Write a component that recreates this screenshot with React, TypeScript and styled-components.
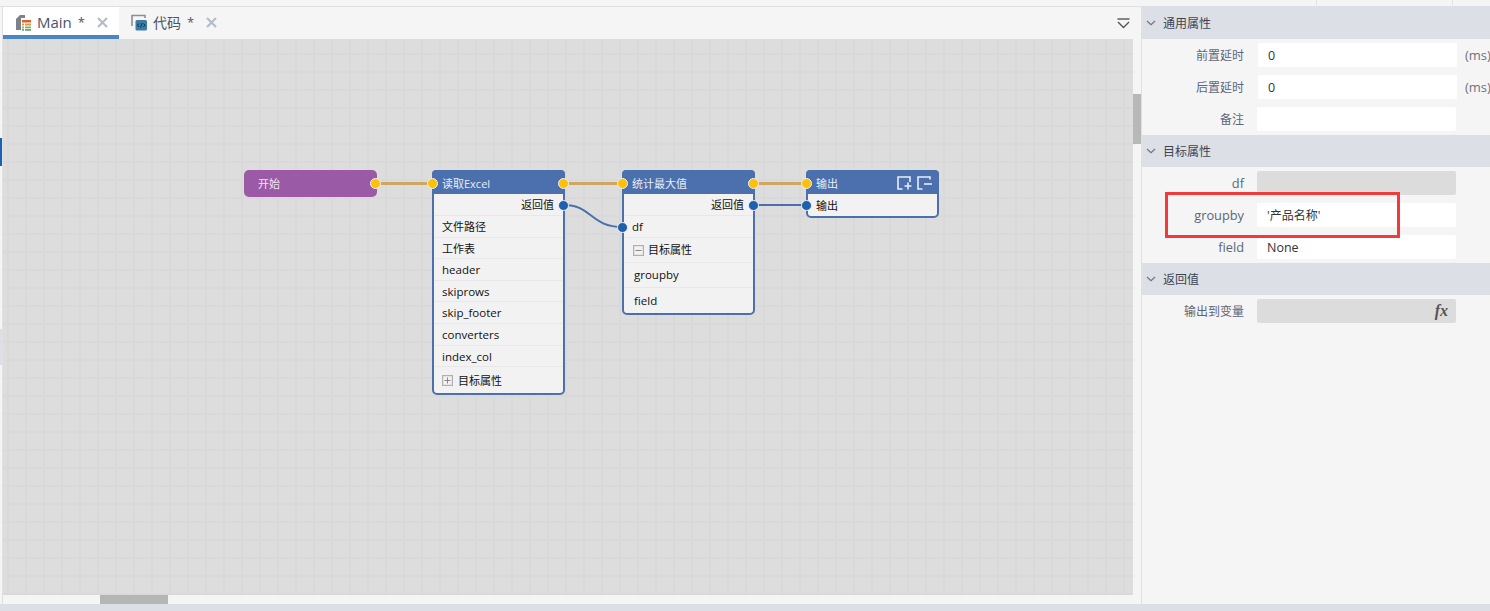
import type { FC, ReactNode } from "react";
import styled, { createGlobalStyle } from "styled-components";

const COLOR = {
  page: "#f5f5f5",
  line: "#e0e0e0",
  strip: "#dce0e6",
  blue: "#4c70ae",
  port: "#1f5fb0",
  gold: "#ffc107",
  wire: "#cfa763",
};

const FONT = `"Open Sans", "Noto Sans CJK SC", sans-serif`;

const Global = createGlobalStyle`
  html, body {
    margin: 0;
    padding: 0;
    background: ${COLOR.page};
    overflow: hidden;
  }
  * { box-sizing: border-box; }
`;

const Page = styled.div`
  width: 1490px;
  height: 611px;
  display: flex;
  flex-direction: column;
  font-family: ${FONT};
  background: ${COLOR.page};
  overflow: hidden;
`;

const TopStrip = styled.div`
  height: 7px;
  flex: none;
  border-bottom: 1px solid ${COLOR.line};
  display: flex;
`;

const Tick = styled.i<{ $left: number }>`
  width: 1px;
  height: 5px;
  background: #e4e4e4;
  margin-left: ${(p) => p.$left}px;
`;

const Main = styled.div`
  flex: 1;
  display: flex;
  min-height: 0;
`;

const Gutter = styled.div`
  width: 3px;
  flex: none;
  border-right: 1px solid ${COLOR.line};
  display: flex;
  flex-direction: column;
`;

const GutterMark = styled.i<{ $top: number; $h: number; $color: string }>`
  display: block;
  margin-top: ${(p) => p.$top}px;
  height: ${(p) => p.$h}px;
  background: ${(p) => p.$color};
`;

const Editor = styled.div`
  width: 1138px;
  flex: none;
  display: flex;
  flex-direction: column;
`;

const TabBar = styled.div`
  height: 32px;
  flex: none;
  display: flex;
  align-items: stretch;
`;

const Tab = styled.div<{ $active?: boolean }>`
  width: ${(p) => (p.$active ? 116 : 112)}px;
  display: flex;
  align-items: center;
  padding: ${(p) => (p.$active ? 2 : 0)}px 0 ${(p) => (p.$active ? 0 : 2)}px 12px;
  background: ${(p) => (p.$active ? "#fff" : "transparent")};
  border-bottom: ${(p) => (p.$active ? `4px solid #4a86c5` : "none")};
  font-size: 15px;
  color: #4a5468;
`;

const TabName = styled.span<{ $cjk?: boolean }>`
  margin-left: 6px;
  font-size: ${(p) => (p.$cjk ? 14 : 15)}px;
`;

const TabStar = styled.span`
  margin-left: 6px;
  font-size: 13px;
`;

const TabClose = styled.svg`
  margin-left: 12px;
`;

const TabFiller = styled.div`
  flex: 1;
  display: flex;
  align-items: center;
  justify-content: flex-end;
  padding: 0 11px 0 0;
`;

const Work = styled.div`
  flex: 1;
  display: flex;
  min-height: 0;
`;

const Canvas = styled.div`
  position: relative;
  width: 1130px;
  height: 556px;
  flex: none;
  overflow: hidden;
  background-color: #dddddd;
  background-image:
    linear-gradient(to right, #d9d9d9 2px, transparent 2px),
    linear-gradient(to bottom, #d9d9d9 2px, transparent 2px);
  background-size: 18px 18px;
  background-position: 4px 14px;
`;

const Wires = styled.svg`
  position: absolute;
  left: 0;
  top: 0;
`;

const VScroll = styled.div`
  width: 8px;
  flex: none;
`;

const VThumb = styled.div`
  margin-top: 55px;
  height: 50px;
  background: #b8b8b8;
`;

const HScroll = styled.div`
  height: 9px;
  flex: none;
  padding-left: 97px;
`;

const HThumb = styled.div`
  width: 68px;
  height: 9px;
  background: #b5b5b5;
`;

const BottomStrip = styled.div`
  height: 7px;
  flex: none;
  background: ${COLOR.strip};
`;

/* nodes sit on a free canvas, so they are placed by coordinates */
const Node = styled.div<{ $x: number; $y: number }>`
  position: absolute;
  left: ${(p) => p.$x - 3}px;
  top: ${(p) => p.$y - 39}px;
  width: 133px;
  background: #f2f2f2;
  border: 2px solid ${COLOR.blue};
  border-radius: 5px;
  font-size: 11px;
  color: #111;
`;

const StartNode = styled.div`
  position: absolute;
  left: 241px;
  top: 131px;
  width: 133px;
  height: 27px;
  background: #9b5aa6;
  border-radius: 5px;
  color: #f0e4f2;
  font-size: 11px;
  line-height: 27px;
  padding-left: 14px;
`;

const NodeHead = styled.div`
  margin: -2px -2px 0;
  height: 24px;
  background: ${COLOR.blue};
  border-radius: 4px 4px 0 0;
  color: #e8edf6;
  line-height: 27px;
  padding: 0 2px 0 10px;
  display: flex;
  justify-content: space-between;
`;

const HeadTools = styled.div`
  display: flex;
  gap: 5px;
  padding: 6px 5px 0 0;
`;

const NodeRow = styled.div<{
  $h: number;
  $right?: boolean;
  $pad?: number;
  $gap?: number;
  $latin?: boolean;
  $drop?: number;
}>`
  height: ${(p) => p.$h}px;
  line-height: ${(p) => p.$h - 1}px;
  padding: ${(p) => p.$drop ?? 0}px ${(p) => (p.$right ? 9 : 0)}px 0 ${(p) => p.$pad ?? 8}px;
  text-align: ${(p) => (p.$right ? "right" : "left")};
  border-bottom: 1px solid #e8e8e8;
  display: ${(p) => (p.$right ? "block" : "flex")};
  align-items: center;
  gap: ${(p) => p.$gap ?? 4}px;
  font-size: ${(p) => (p.$latin ? 11.5 : 11)}px;
  &:last-child { border-bottom: none; }
`;

const Port = styled.i<{ $x: number; $y: number; $gold?: boolean }>`
  position: absolute;
  left: ${(p) => p.$x - 3 - 6}px;
  top: ${(p) => p.$y - 39 - 5}px;
  width: 11px;
  height: 11px;
  border-radius: 50%;
  background: ${(p) => (p.$gold ? COLOR.gold : COLOR.port)};
  border: 1px solid #eef0f2;
`;

const Panel = styled.div`
  flex: 1;
  margin-top: -1px;
  border-left: 1px solid ${COLOR.line};
  overflow: hidden;
`;

const SectionHead = styled.div`
  height: 32px;
  background: ${COLOR.strip};
  display: flex;
  align-items: center;
  padding-left: 4px;
  font-size: 12px;
  color: #3c4454;
  gap: 7px;
  &:first-child { height: 33px; }
`;

const Rows = styled.div`
  padding: 4px 0;
  display: flex;
  flex-direction: column;
  gap: 8px;
`;

const Row = styled.div`
  height: 24px;
  display: flex;
  align-items: center;
  width: 400px;
`;

const Label = styled.label<{ $latin?: boolean }>`
  width: 102px;
  text-align: right;
  font-size: ${(p) => (p.$latin ? 12.8 : 12)}px;
  color: #5e6678;
`;

const Field = styled.div<{ $shift?: number; $off?: boolean; $cjk?: boolean }>`
  position: relative;
  width: 199px;
  height: 24px;
  margin-left: ${(p) => 13 + (p.$shift ?? 0)}px;
  padding-left: 10px;
  background: ${(p) => (p.$off ? "#dcdcdc" : "#fff")};
  border-radius: 2px;
  font-size: ${(p) => (p.$cjk ? 12 : 12.5)}px;
  line-height: 26px;
  color: #333;
`;

const Unit = styled.span`
  margin-left: 8px;
  font-size: 13px;
  color: #6b7280;
`;

const Fx = styled.span`
  position: absolute;
  right: 8px;
  top: -1px;
  font-family: "Liberation Serif", serif;
  font-style: italic;
  font-weight: bold;
  font-size: 16px;
  color: #555;
`;

/* red annotation drawn over the form */
const Highlight = styled.div`
  position: absolute;
  left: 1165px;
  top: 192px;
  width: 235px;
  height: 46px;
  border: 3px solid #f33a3a;
  pointer-events: none;
`;

const Chevron: FC = () => (
  <svg width="10" height="6" viewBox="0 0 10 6">
    <path d="M1 1l4 3.6L9 1" fill="none" stroke="#6a7280" strokeWidth="1.2" />
  </svg>
);

const CloseIcon: FC = () => (
  <TabClose width="11" height="11" viewBox="0 0 11 11">
    <path d="M1 1l9 9M10 1l-9 9" stroke="#b4bcc6" strokeWidth="2.2" />
  </TabClose>
);

const MainIcon: FC = () => (
  <svg width="16" height="17" viewBox="0 0 16 17">
    <path d="M1 5l4-4h5v3H6v12H1z" fill="#7d8288" />
    <rect x="6" y="6" width="10" height="11" fill="#fff" />
    <rect x="7" y="6" width="9" height="2.5" fill="#d8622c" />
    <rect x="7" y="9.5" width="2" height="2" fill="#e09a3c" />
    <rect x="10" y="9.5" width="6" height="2" fill="#e09a3c" />
    <rect x="7" y="12.5" width="2" height="1.8" fill="#7cb27c" />
    <rect x="10" y="12.5" width="6" height="1.8" fill="#7cb27c" />
    <rect x="7" y="15" width="2" height="1.8" fill="#6aa86a" />
    <rect x="10" y="15" width="6" height="1.8" fill="#6aa86a" />
  </svg>
);

const CodeIcon: FC = () => (
  <svg width="16" height="17" viewBox="0 0 16 17">
    <path d="M1 12V1.5h13V4" fill="none" stroke="#8a8f96" strokeWidth="1.6" />
    <rect x="4.5" y="6" width="11.5" height="10.5" rx="1.5" fill="#3a7ca5" />
    <path d="M8 9.5L6.5 11.2 8 13M12.5 9.5l1.5 1.7-1.5 1.8M11 9l-1.4 4.6" fill="none" stroke="#14324a" strokeWidth="1" />
  </svg>
);

const MenuIcon: FC = () => (
  <svg width="13" height="11" viewBox="0 0 13 11">
    <path d="M0.5 1h12" stroke="#555" strokeWidth="1.4" />
    <path d="M1 4l5.5 5.5L12 4" fill="none" stroke="#555" strokeWidth="1.4" />
  </svg>
);

const AddIcon: FC = () => (
  <svg width="15" height="14" viewBox="0 0 15 14">
    <path d="M5.5 13H1V1h12v5" fill="none" stroke="#e8edf6" strokeWidth="1.6" />
    <path d="M11 6.5v7M7.5 10h7" stroke="#e8edf6" strokeWidth="1.6" />
  </svg>
);

const RemoveIcon: FC = () => (
  <svg width="15" height="14" viewBox="0 0 15 14">
    <path d="M5.5 13H1V1h12v2.5" fill="none" stroke="#e8edf6" strokeWidth="1.6" />
    <path d="M7 8h8" stroke="#e8edf6" strokeWidth="1.6" />
  </svg>
);

const Toggle: FC<{ open?: boolean }> = ({ open }) => (
  <svg width="11" height="11" viewBox="0 0 11 11">
    <rect x="0.6" y="0.6" width="9.8" height="9.8" fill="#f2f2f2" stroke="#b0b0b0" strokeWidth="1.2" />
    <path d={open ? "M2.5 5.5h6" : "M2.5 5.5h6M5.5 2.5v6"} stroke="#888" />
  </svg>
);

const Section: FC<{ title: string; children: ReactNode }> = ({ title, children }) => (
  <>
    <SectionHead>
      <Chevron />
      <span>{title}</span>
    </SectionHead>
    <Rows>{children}</Rows>
  </>
);

const excelRows = [
  { name: "文件路径" },
  { name: "工作表" },
  { name: "header", latin: true },
  { name: "skiprows", latin: true },
  { name: "skip_footer", latin: true },
  { name: "converters", latin: true },
  { name: "index_col", latin: true },
];

const App: FC = () => {
  return (
    <Page>
      <Global />
      <TopStrip>
        <Tick $left={1316} />
        <Tick $left={135} />
      </TopStrip>
      <Main>
        <Gutter>
          <GutterMark $top={131} $h={28} $color={COLOR.port} />
          <GutterMark $top={163} $h={36} $color={COLOR.strip} />
        </Gutter>
        <Editor>
          <TabBar>
            <Tab $active>
              <MainIcon />
              <TabName>Main</TabName>
              <TabStar>*</TabStar>
              <CloseIcon />
            </Tab>
            <Tab>
              <CodeIcon />
              <TabName $cjk>代码</TabName>
              <TabStar>*</TabStar>
              <CloseIcon />
            </Tab>
            <TabFiller>
              <MenuIcon />
            </TabFiller>
          </TabBar>
          <Work>
            <Canvas>
              <Wires width="1130" height="556" viewBox="3 39 1130 556">
                <path d="M377 183.5h56M564 183.5h59M754 183.5h53" stroke={COLOR.wire} strokeWidth="3" fill="none" />
                <path d="M754 205h53M564 205c28 0 26 22 59 22" stroke={COLOR.blue} strokeWidth="2" fill="none" />
              </Wires>

              <StartNode>开始</StartNode>

              <Node $x={432} $y={170}>
                <NodeHead>读取Excel</NodeHead>
                <NodeRow $h={22} $right>返回值</NodeRow>
                {excelRows.map((row) => (
                  <NodeRow key={row.name} $h={21.6} $latin={row.latin} $drop={2}>
                    {row.name}
                  </NodeRow>
                ))}
                <NodeRow $h={26} $gap={5}>
                  <Toggle />
                  目标属性
                </NodeRow>
              </Node>

              <Node $x={622} $y={170}>
                <NodeHead>统计最大值</NodeHead>
                <NodeRow $h={22} $right>返回值</NodeRow>
                <NodeRow $h={22} $latin>df</NodeRow>
                <NodeRow $h={25} $pad={9}>
                  <Toggle open />
                  目标属性
                </NodeRow>
                <NodeRow $h={25} $pad={10} $latin>groupby</NodeRow>
                <NodeRow $h={25} $pad={10} $latin>field</NodeRow>
              </Node>

              <Node $x={806} $y={170}>
                <NodeHead>
                  输出
                  <HeadTools>
                    <AddIcon />
                    <RemoveIcon />
                  </HeadTools>
                </NodeHead>
                <NodeRow $h={22}>输出</NodeRow>
              </Node>

              <Port $gold $x={376} $y={183} />
              <Port $gold $x={433} $y={183} />
              <Port $gold $x={564} $y={183} />
              <Port $gold $x={623} $y={183} />
              <Port $gold $x={754} $y={183} />
              <Port $gold $x={807} $y={183} />
              <Port $x={564} $y={205} />
              <Port $x={754} $y={205} />
              <Port $x={807} $y={205} />
              <Port $x={623} $y={227} />
            </Canvas>
            <VScroll>
              <VThumb />
            </VScroll>
          </Work>
          <HScroll>
            <HThumb />
          </HScroll>
        </Editor>
        <Panel>
          <Section title="通用属性">
            <Row>
              <Label>前置延时</Label>
              <Field $shift={1}>0</Field>
              <Unit>(ms)</Unit>
            </Row>
            <Row>
              <Label>后置延时</Label>
              <Field $shift={1}>0</Field>
              <Unit>(ms)</Unit>
            </Row>
            <Row>
              <Label>备注</Label>
              <Field />
            </Row>
          </Section>
          <Section title="目标属性">
            <Row>
              <Label $latin>df</Label>
              <Field $off />
            </Row>
            <Row>
              <Label $latin>groupby</Label>
              <Field $cjk>'产品名称'</Field>
            </Row>
            <Row>
              <Label $latin>field</Label>
              <Field>None</Field>
            </Row>
          </Section>
          <Section title="返回值">
            <Row>
              <Label>输出到变量</Label>
              <Field $off>
                <Fx>fx</Fx>
              </Field>
            </Row>
          </Section>
        </Panel>
      </Main>
      <BottomStrip />
      <Highlight />
    </Page>
  );
};

export default App;
